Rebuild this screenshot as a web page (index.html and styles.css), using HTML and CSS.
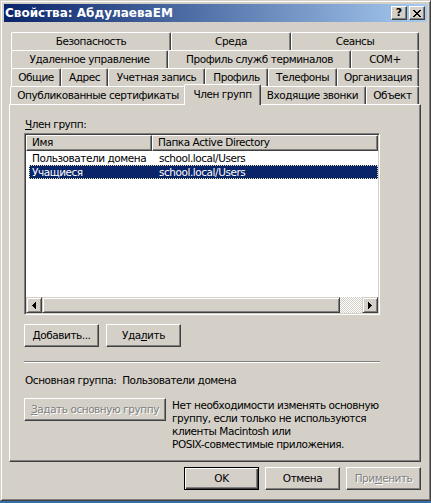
FILE: index.html
```html
<!DOCTYPE html>
<html lang="ru">
<head>
<meta charset="utf-8">
<title>Свойства: АбдулаеваЕМ</title>
<link rel="stylesheet" href="styles.css">
</head>
<body>
<div class="window">
  <div class="titlebar">
    <span class="title">Свойства: АбдулаеваЕМ</span>
    <div class="caption-btns">
      <div class="cbtn help">?</div>
      <div class="cbtn close">
        <svg width="8" height="7" viewBox="0 0 8 7" shape-rendering="crispEdges">
          <rect x="0" y="0" width="2" height="1"/><rect x="6" y="0" width="2" height="1"/>
          <rect x="1" y="1" width="2" height="1"/><rect x="5" y="1" width="2" height="1"/>
          <rect x="2" y="2" width="4" height="1"/>
          <rect x="3" y="3" width="2" height="1"/>
          <rect x="2" y="4" width="4" height="1"/>
          <rect x="1" y="5" width="2" height="1"/><rect x="5" y="5" width="2" height="1"/>
          <rect x="0" y="6" width="2" height="1"/><rect x="6" y="6" width="2" height="1"/>
        </svg>
      </div>
    </div>
  </div>
  <div class="content">
    <div class="tabs">
      <div class="tabrow r1">
        <div class="tab">Безопасность</div>
        <div class="tab">Среда</div>
        <div class="tab">Сеансы</div>
      </div>
      <div class="tabrow r2">
        <div class="tab">Удаленное управление</div>
        <div class="tab">Профиль служб терминалов</div>
        <div class="tab">COM+</div>
      </div>
      <div class="tabrow r3">
        <div class="tab">Общие</div>
        <div class="tab">Адрес</div>
        <div class="tab">Учетная запись</div>
        <div class="tab">Профиль</div>
        <div class="tab">Телефоны</div>
        <div class="tab">Организация</div>
      </div>
      <div class="tabrow r4">
        <div class="tab">Опубликованные сертификаты</div>
        <div class="tab selected">Член групп</div>
        <div class="tab">Входящие звонки</div>
        <div class="tab">Объект</div>
      </div>
    </div>
    <div class="panel">
      <div class="label"><u>Ч</u>лен групп:</div>
      <div class="listbox">
        <div class="lv-header">
          <div class="hcell c1">Имя</div>
          <div class="hcell c2">Папка Active Directory</div>
        </div>
        <div class="lv-rows">
          <div class="lv-row">
            <div class="cell c1">Пользователи домена</div>
            <div class="cell c2">school.local/Users</div>
          </div>
          <div class="lv-row selected">
            <div class="cell c1">Учащиеся</div>
            <div class="cell c2">school.local/Users</div>
          </div>
        </div>
        <div class="hscroll">
          <div class="sbtn">
            <svg width="4" height="7" viewBox="0 0 4 7" shape-rendering="crispEdges"><rect x="0" y="3" width="1" height="1"/><rect x="1" y="2" width="1" height="3"/><rect x="2" y="1" width="1" height="5"/><rect x="3" y="0" width="1" height="7"/></svg>
          </div>
          <div class="thumb"></div>
          <div class="track"></div>
          <div class="sbtn">
            <svg width="4" height="7" viewBox="0 0 4 7" shape-rendering="crispEdges"><rect x="0" y="0" width="1" height="7"/><rect x="1" y="1" width="1" height="5"/><rect x="2" y="2" width="1" height="3"/><rect x="3" y="3" width="1" height="1"/></svg>
          </div>
        </div>
      </div>
      <div class="btnrow">
        <div class="btn"><u>Д</u>обавить...</div>
        <div class="btn">Уда<u>л</u>ить</div>
      </div>
      <div class="separator"></div>
      <div class="primary">Основная группа:&nbsp; Пользователи домена</div>
      <div class="primary-row">
        <div class="btn wide disabled"><u>З</u>адать основную группу</div>
        <div class="note">Нет необходимости изменять основную<br>группу, если только не используются<br>клиенты Macintosh или<br>POSIX-совместимые приложения.</div>
      </div>
    </div>
    <div class="footer">
      <div class="btn default">OK</div>
      <div class="btn">Отмена</div>
      <div class="btn disabled">При<u>м</u>енить</div>
    </div>
  </div>
</div>
</body>
</html>
```
FILE: styles.css
```css
* { box-sizing: border-box; }
html, body { margin: 0; padding: 0; }
body {
  background: #3a6ea5;
  width: 431px;
  height: 503px;
  overflow: hidden;
  font-family: "DejaVu Sans", Tahoma, sans-serif;
  font-size: 10.5px;
  letter-spacing: -0.45px;
  color: #000;
}
u { text-decoration: underline; text-underline-offset: 1px; }

.window {
  width: 431px;
  height: 501px;
  background: #d4d0c8;
  border: 1px solid;
  border-color: #d4d0c8 #404040 #404040 #d4d0c8;
  box-shadow: inset 1px 1px #fff, inset -1px -1px #808080;
  padding: 3px;
  display: flex;
  flex-direction: column;
}

.titlebar {
  height: 18px;
  flex: none;
  background: linear-gradient(to right, #0a246a, #a6caf0);
  display: flex;
  align-items: center;
  justify-content: space-between;
  padding: 0 2px 0 1px;
}
.title {
  color: #fff;
  font-weight: bold;
  font-size: 12px;
  letter-spacing: 0;
  white-space: nowrap;
}
.caption-btns { display: flex; gap: 2px; }
.cbtn {
  width: 16px;
  height: 14px;
  background: #d4d0c8;
  border: 1px solid;
  border-color: #fff #404040 #404040 #fff;
  box-shadow: inset -1px -1px #808080;
  display: flex;
  align-items: center;
  justify-content: center;
}
.cbtn.help { font-weight: bold; font-size: 11px; line-height: 1; padding-bottom: 1px; letter-spacing: 0; }
.cbtn svg { fill: #000; }

.content {
  flex: 1;
  display: flex;
  flex-direction: column;
  padding: 10px 6px 0 5px;
}

.tabs { display: flex; flex-direction: column; }
.tabrow { display: grid; height: 18px; }
.r1 { grid-template-columns: 160px 120px 128px; margin-left: 2px; }
.r2 { grid-template-columns: 157px 183px 68px; margin-left: 2px; }
.r3 { grid-template-columns: 50px 47px 97px 63px 69px 82px; margin-left: 2px; }
.r4 { grid-template-columns: 176px 73px 107px 53px; margin-left: 1px; }

.tab {
  background: #d4d0c8;
  border-top: 1px solid #fff;
  border-left: 1px solid #fff;
  border-right: 1px solid #404040;
  box-shadow: inset -1px 0 #808080;
  border-radius: 2px 2px 0 0;
  display: flex;
  align-items: center;
  justify-content: center;
  white-space: nowrap;
  overflow: hidden;
  padding-bottom: 1px;
}
.tab.selected {
  margin: -2px -2px -1px -2px;
  z-index: 2;
  padding-bottom: 2px;
}

.panel {
  height: 358px;
  flex: none;
  border: 1px solid;
  border-color: #fff #404040 #404040 #fff;
  box-shadow: inset -1px -1px #808080;
  padding: 13px 0 0 14px;
  display: flex;
  flex-direction: column;
}
.label { line-height: 13px; height: 13px; margin-left: 1px; }

.listbox {
  margin-top: 2px;
  width: 356px;
  height: 182px;
  background: #fff;
  border: 1px solid;
  border-color: #808080 #fff #fff #808080;
  box-shadow: inset 1px 1px #404040, inset -1px -1px #d4d0c8;
  padding: 1px;
  display: flex;
  flex-direction: column;
}
.lv-header {
  height: 16px;
  display: flex;
  flex: none;
}
.hcell {
  background: #d4d0c8;
  border: 1px solid;
  border-color: #fff #404040 #404040 #fff;
  box-shadow: inset -1px -1px #808080;
  padding-left: 5px;
  line-height: 13px;
  white-space: nowrap;
  overflow: hidden;
}
.hcell.c1 { width: 126px; flex: none; }
.hcell.c2 { flex: 1; }

.lv-rows { flex: 1; }
.lv-row {
  height: 14px;
  display: flex;
  margin-left: 3px;
  line-height: 14px;
  white-space: nowrap;
}
.lv-row .c1 { width: 123px; padding-left: 3px; flex: none; }
.lv-row .c2 { flex: 1; padding-left: 7px; }
.lv-row.selected {
  background: #0a246a;
  color: #fff;
  outline: 1px dotted #e8dca0;
  outline-offset: -1px;
}

.hscroll {
  height: 16px;
  display: flex;
  flex: none;
}
.sbtn, .thumb {
  background: #d4d0c8;
  border: 1px solid;
  border-color: #d4d0c8 #404040 #404040 #d4d0c8;
  box-shadow: inset 1px 1px #fff, inset -1px -1px #808080;
}
.sbtn {
  width: 16px;
  flex: none;
  display: flex;
  align-items: center;
  justify-content: center;
}
.sbtn svg { fill: #000; }
.thumb { width: 298px; flex: none; }
.track {
  flex: 1;
  background: repeating-conic-gradient(#d4d0c8 0 25%, #fff 0 50%) 0 0 / 2px 2px;
}

.btn {
  width: 75px;
  height: 23px;
  background: #d4d0c8;
  border: 1px solid;
  border-color: #fff #404040 #404040 #fff;
  box-shadow: inset -1px -1px #808080;
  display: flex;
  align-items: center;
  justify-content: center;
  white-space: nowrap;
  padding-bottom: 1px;
}
.btn.default {
  border-color: #000;
  box-shadow: inset 1px 1px #fff, inset -1px -1px #404040, inset -2px -2px #808080;
}
.btn.disabled {
  color: #808080;
  text-shadow: 1px 1px #fff;
}
.btn.wide { width: 142px; }

.btnrow {
  display: flex;
  gap: 7px;
  margin-top: 9px;
}
.separator {
  margin-top: 14px;
  width: 356px;
  height: 2px;
  border-top: 1px solid #808080;
  border-bottom: 1px solid #fff;
}
.primary {
  margin-top: 11px;
  line-height: 13px;
  margin-left: 1px;
}
.primary-row {
  margin-top: 11px;
  display: flex;
  gap: 6px;
  align-items: flex-start;
}
.note {
  line-height: 13px;
  padding-top: 1px;
  white-space: nowrap;
}

.footer {
  margin-top: 5px;
  display: flex;
  justify-content: flex-end;
  gap: 6px;
}
```
